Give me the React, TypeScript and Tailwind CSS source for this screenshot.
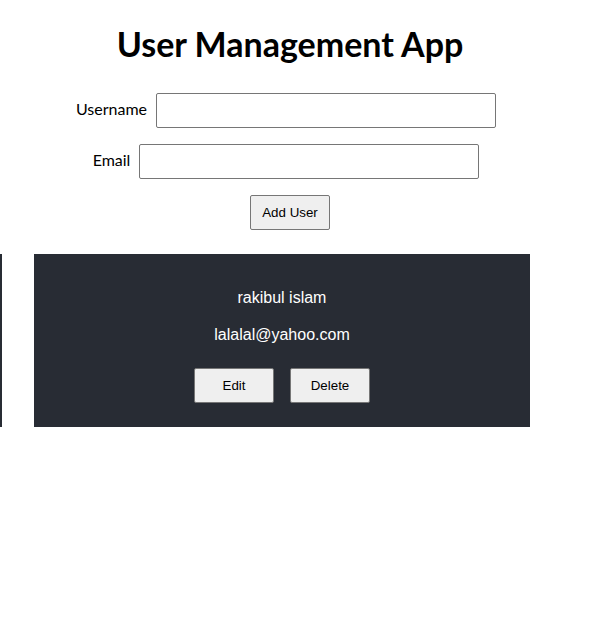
import React from "react";

export default function App() {
  return (
    <div className="w-[603px] h-[625px] bg-white overflow-hidden text-black" style={{ fontFamily: "Lato, 'Liberation Sans', sans-serif" }}>
      <div className="w-[580px] flex flex-col items-center">
        <h1 className="mt-[20px] text-[34px] font-bold leading-[48px] font-['Lato',sans-serif]">User Management App</h1>
        <div className="mt-[25px] flex items-center h-[35px]">
          <label className="text-[16px] mr-[9px] -mt-[3px]">Username</label>
          <input className="w-[340px] h-[35px] border border-[#767676] rounded-[2px] mr-[8px]" />
        </div>
        <div className="mt-[16px] flex items-center h-[35px]">
          <label className="text-[16px] mr-[9px] -mt-[3px]">Email</label>
          <input className="w-[340px] h-[35px] border border-[#767676] rounded-[2px] mr-[8px]" />
        </div>
        <button className="mt-[16px] w-[80px] h-[35px] bg-[#efefef] border border-[#767676] rounded-[2px] text-[13.33px] font-['Liberation_Sans',sans-serif]">Add User</button>
      </div>
      <div className="mt-[24px] flex h-[173px]">
        <div className="w-[2px] bg-[#282c34]" />
        <div className="ml-[32px] w-[496px] bg-[#282c34] flex flex-col items-center text-white pt-[33px]" style={{ fontFamily: "'Liberation Sans', sans-serif" }}>
          <p className="text-[16px] leading-[22px]">rakibul islam</p>
          <p className="mt-[15px] text-[16px] leading-[22px]">lalalal@yahoo.com</p>
          <div className="mt-[22px] flex gap-[16px]">
            <button className="w-[80px] h-[35px] bg-[#efefef] border border-[#767676] rounded-[2px] text-[13.33px] text-black">Edit</button>
            <button className="w-[80px] h-[35px] bg-[#efefef] border border-[#767676] rounded-[2px] text-[13.33px] text-black">Delete</button>
          </div>
        </div>
      </div>
    </div>
  );
}
